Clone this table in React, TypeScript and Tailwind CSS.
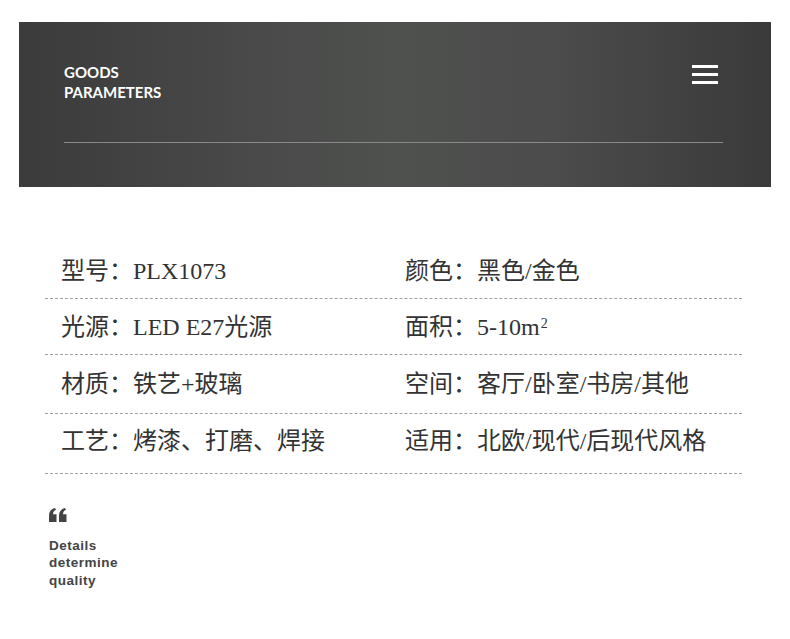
import React from "react";

const rows = [
  { h: "h-[55px]", pb: "", left: ["型号：", "PLX1073"], right: ["颜色：", "黑色/金色"] },
  { h: "h-[56px]", pb: "", left: ["光源：", "LED E27光源"], right: ["面积：", "5-10m"], sup: true },
  { h: "h-[59px]", pb: "", left: ["材质：", "铁艺+玻璃"], right: ["空间：", "客厅/卧室/书房/其他"] },
  { h: "h-[60px]", pb: "pb-[6px]", left: ["工艺：", "烤漆、打磨、焊接"], right: ["适用：", "北欧/现代/后现代风格"] },
];

export default function App() {
  return (
    <div className="bg-white w-[790px] h-[639px] overflow-hidden">
      {/* Header banner */}
      <div className="mx-[19px] mt-[22px] h-[165px] bg-[linear-gradient(90deg,#3b3b3b_0%,#484948_30%,#4f514f_50%,#4b4c4b_70%,#3a3a3a_100%)] pl-[45px] pr-[48px] pt-[40px]">
        <div className="flex justify-between items-start">
          <div className="text-white font-bold text-[15px] leading-[20px] font-['Lato',sans-serif]">
            <div>GOODS</div>
            <div>PARAMETERS</div>
          </div>
          <div className="flex flex-col gap-[5px] mr-[5px] mt-[3px]">
            <span className="block w-[26px] h-[3px] bg-white" />
            <span className="block w-[26px] h-[3px] bg-white" />
            <span className="block w-[26px] h-[3px] bg-white" />
          </div>
        </div>
        <div className="mt-[40px] h-px bg-[#8a8a8a]" />
      </div>

      {/* Parameter table */}
      <div className="mx-[45px] w-[697px] mt-[57px] text-[#333] text-[24px] font-['Liberation_Serif','Noto_Sans_CJK_SC',serif]">
        {rows.map((r, i) => (
          <div key={i} className={`${r.h} ${r.pb} grid grid-cols-[360px_1fr] items-center border-b border-dashed border-[#a0a0a0]`}>
            <div className="pl-4 flex items-baseline">
              <span>{r.left[0]}</span>
              <span>{r.left[1]}</span>
            </div>
            <div className="flex items-baseline">
              <span>{r.right[0]}</span>
              <span>
                {r.right[1]}
                {r.sup && <sup className="text-[14px] ml-[1px]">2</sup>}
              </span>
            </div>
          </div>
        ))}
      </div>

      {/* Quote */}
      <div className="ml-[49px] mt-[34px] text-[#444] font-['Liberation_Sans',sans-serif]">
        <svg width="18" height="14" viewBox="0 0 18 14" className="block">
          <path d="M0 14V7.5C0 3.5 2 1 6 0l1 1.8C5 2.6 4 4 4 6.2h3.5V14Z" fill="#444" />
          <path d="M10 14V7.5C10 3.5 12 1 16 0l1 1.8C15 2.6 14 4 14 6.2h3.5V14Z" fill="#444" />
        </svg>
        <div className="mt-[15px] font-bold text-[13.5px] leading-[17.3px] tracking-[0.5px]">
          <div>Details</div>
          <div>determine</div>
          <div>quality</div>
        </div>
      </div>
    </div>
  );
}
